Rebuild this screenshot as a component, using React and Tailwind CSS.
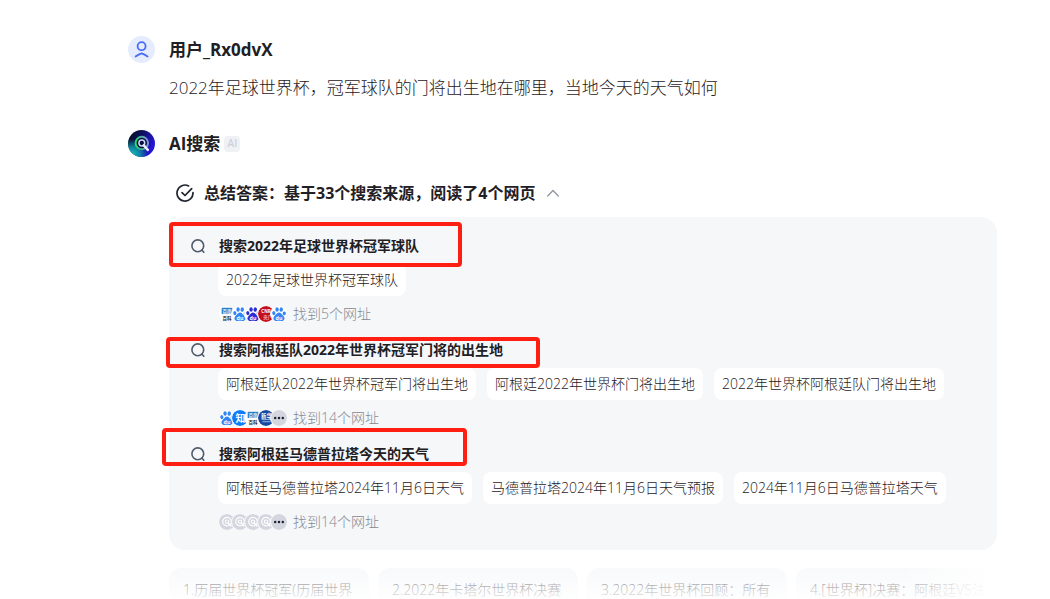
import { useState } from 'react';

const steps = [
  {
    title: '搜索2022年足球世界杯冠军球队',
    queries: ['2022年足球世界杯冠军球队'],
    sources: ['baike', 'paw', 'pawDark', 'cnr', 'paw'],
    found: '找到5个网址',
    frame: 'left-0 -top-1.5 w-[293px] h-[45px]',
  },
  {
    title: '搜索阿根廷队2022年世界杯冠军门将的出生地',
    queries: ['阿根廷队2022年世界杯冠军门将出生地', '阿根廷2022年世界杯门将出生地', '2022年世界杯阿根廷队门将出生地'],
    sources: ['paw', 'zhihu', 'baike', 'xinhua', 'more'],
    found: '找到14个网址',
    frame: '-left-[3px] top-[5px] w-[374px] h-[31px]',
  },
  {
    title: '搜索阿根廷马德普拉塔今天的天气',
    queries: ['阿根廷马德普拉塔2024年11月6日天气', '马德普拉塔2024年11月6日天气预报', '2024年11月6日马德普拉塔天气'],
    sources: ['blank', 'blank', 'blank', 'blank', 'more'],
    found: '找到14个网址',
    frame: '-left-[7px] -top-2 w-[305px] h-[38px]',
  },
];

const references = ['1.历届世界杯冠军(历届世界', '2.2022年卡塔尔世界杯决赛', '3.2022年世界杯回顾：所有', '4.[世界杯]决赛：阿根廷VS法'];

function UserAvatar() {
  return (
    <svg className="w-[27px] h-[27px] shrink-0" viewBox="0 0 27 27" fill="none" aria-hidden="true">
      <circle cx="13.5" cy="13.5" r="13.5" fill="#e4ecfd" />
      <circle cx="13.6" cy="10.2" r="4" stroke="#4a6cf7" strokeWidth="1.8" />
      <path d="M7.6 20.6c1.7-1.200 3.700-2.400 6-3.200 2.300.8 4.300 2 6 3.200" stroke="#4a6cf7" strokeWidth="1.8" strokeLinecap="round" />
    </svg>
  );
}

function AiAvatar() {
  return (
    <svg className="w-[27px] h-[27px] shrink-0" viewBox="0 0 27 27" fill="none" aria-hidden="true">
      <defs>
        <linearGradient id="aiBase" x1="3" y1="5" x2="26" y2="14" gradientUnits="userSpaceOnUse">
          <stop offset="0" stopColor="#07102c" />
          <stop offset="0.4" stopColor="#0e0f5c" />
          <stop offset="1" stopColor="#2417d8" />
        </linearGradient>
        <radialGradient id="aiTeal" cx="4" cy="25" r="16" gradientUnits="userSpaceOnUse">
          <stop offset="0" stopColor="#12c4c0" />
          <stop offset="0.5" stopColor="#0f9fb0" stopOpacity="0.8" />
          <stop offset="1" stopColor="#0f9fb0" stopOpacity="0" />
        </radialGradient>
        <linearGradient id="aiRing" x1="7" y1="14" x2="21" y2="12" gradientUnits="userSpaceOnUse">
          <stop offset="0" stopColor="#1fe860" />
          <stop offset="0.4" stopColor="#3fb08f" />
          <stop offset="1" stopColor="#8f90e8" />
        </linearGradient>
      </defs>
      <circle cx="13.5" cy="13.5" r="13.5" fill="url(#aiBase)" />
      <circle cx="13.5" cy="13.5" r="13.5" fill="url(#aiTeal)" />
      <circle cx="13.8" cy="13" r="6.2" fill="#080c3a" stroke="url(#aiRing)" strokeWidth="2" />
      <circle cx="13.8" cy="13" r="2.9" stroke="#c9d9ff" strokeWidth="1.5" />
      <path d="M15.8 15.4l4 4.4" stroke="#eceaff" strokeWidth="2.6" strokeLinecap="round" />
    </svg>
  );
}

function CheckIcon() {
  return (
    <svg className="w-[18px] h-[18px] shrink-0" viewBox="0 0 18 18" fill="none" stroke="#1f2430" strokeWidth="1.7" strokeLinecap="round" strokeLinejoin="round" aria-hidden="true">
      <path d="M12.6 1.9A8 8 0 1 0 17 8.6" />
      <path d="M6 8.6l3 2.9 6.7-6.9" />
    </svg>
  );
}

function SearchIcon() {
  return (
    <svg className="w-[14px] h-[14px] shrink-0" viewBox="0 0 14 14" fill="none" stroke="#4f5a6e" strokeWidth="1.6" strokeLinecap="round" aria-hidden="true">
      <circle cx="6.8" cy="6.8" r="5.9" />
      <path d="M10.8 11l2 2.2" />
    </svg>
  );
}

function Paw({ color }) {
  return (
    <>
      <circle cx="9" cy="9" r="9" fill="#fff" />
      <g fill={color}>
        <ellipse cx="3.2" cy="8" rx="1.8" ry="2.3" transform="rotate(-15 3.2 8)" />
        <ellipse cx="6.8" cy="3.9" rx="1.9" ry="2.5" />
        <ellipse cx="11.5" cy="4" rx="1.9" ry="2.5" transform="rotate(12 11.5 4)" />
        <ellipse cx="14.9" cy="8.3" rx="1.8" ry="2.2" transform="rotate(10 14.9 8.3)" />
        <path d="M9 7.2c1.8 0 2.6 1.4 3.6 2.6 1.2 1.3 2.9 2.500 2.600 4.700-.3 2-2 2.500-3.500 2.300-1.800-.3-3.600-.3-5.400 0-1.500.2-3.200-.3-3.500-2.300-.3-2.200 1.400-3.400 2.600-4.700C6.400 8.600 7.200 7.200 9 7.200z" />
      </g>
      <text x="9" y="15.4" fontSize="6" fontWeight="700" textAnchor="middle" fill="#fff">du</text>
    </>
  );
}

function SourceIcon({ type }) {
  return (
    <svg className="w-[18px] h-[18px] shrink-0 rounded-full border border-[#f5f7f9] bg-[#f5f7f9]" viewBox="0 0 18 18" aria-hidden="true">
      {type === 'paw' && <Paw color="#3385f5" />}
      {type === 'pawDark' && <Paw color="#2a2ed6" />}
      {type === 'baike' && (
        <>
          <circle cx="9" cy="9" r="9" fill="#fff" />
          <rect x="3" y="2" width="12" height="7" fill="#2c7fc4" />
          <text x="9" y="7.5" fontSize="5" fontWeight="700" textAnchor="middle" fill="#e2f1fc">百度</text>
          <text x="9" y="15.5" fontSize="5" fontWeight="700" textAnchor="middle" fill="#23272f">百科</text>
        </>
      )}
      {type === 'cnr' && (
        <>
          <circle cx="9" cy="9" r="9" fill="#c4101e" />
          <text x="9" y="7.5" fontSize="5" fontWeight="700" textAnchor="middle" fill="#fff">CNR</text>
          <text x="11" y="15" fontSize="5" fontWeight="700" textAnchor="middle" fill="#f4a9ad">央广</text>
        </>
      )}
      {type === 'zhihu' && (
        <>
          <circle cx="9" cy="9" r="9" fill="#0f7bfb" />
          <text x="9.5" y="13" fontSize="11" fontWeight="700" textAnchor="middle" fill="#fff">知</text>
        </>
      )}
      {type === 'xinhua' && (
        <>
          <circle cx="9" cy="9" r="9" fill="#15489f" />
          <text x="9.5" y="8.5" fontSize="6" fontWeight="700" textAnchor="middle" fill="#fff">新华</text>
          <path d="M4 10.8h11M5 13.2h9" stroke="#a9c4ec" strokeWidth="1" />
        </>
      )}
      {type === 'blank' && (
        <>
          <circle cx="9" cy="9" r="9" fill="#d3d6df" />
          <circle cx="9" cy="8.6" r="4.8" fill="none" stroke="#fff" strokeWidth="1.3" />
          <circle cx="9" cy="8.6" r="1.9" fill="none" stroke="#fff" strokeWidth="1.2" />
          <path d="M10.5 10.5l3 3" stroke="#fff" strokeWidth="1.6" strokeLinecap="round" />
        </>
      )}
      {type === 'more' && (
        <>
          <circle cx="9" cy="9" r="9" fill="#d3d6df" />
          <g fill="#1f2430">
            <circle cx="4.7" cy="9" r="1.4" />
            <circle cx="9" cy="9" r="1.4" />
            <circle cx="13.3" cy="9" r="1.4" />
          </g>
        </>
      )}
    </svg>
  );
}

function SearchStep({ step }) {
  return (
    <section>
      <div className="relative flex h-9 items-center gap-3.5 pl-[22px]">
        <SearchIcon />
        <h3 className="text-sm font-bold text-[#1f2024]">{step.title}</h3>
        {/* Highlight frame */}
        <div className={`pointer-events-none absolute z-10 rounded-sm border-4 border-[#ff1e12] ${step.frame}`} />
      </div>
      <div className="flex flex-wrap gap-[11px] pl-[49px]">
        {step.queries.map((query) => (
          <button key={query} type="button" className="h-8 rounded-lg bg-white px-2 text-sm font-light text-[#1f2024]">
            {query}
          </button>
        ))}
      </div>
      <div className="flex h-9 items-center gap-[5px] pl-[49px]">
        <div className="flex -space-x-[5px]">
          {step.sources.map((type, i) => (
            <SourceIcon key={i} type={type} />
          ))}
        </div>
        <span className="text-sm font-light text-[#848891]">{step.found}</span>
      </div>
    </section>
  );
}

export default function App() {
  const [open, setOpen] = useState(true);

  return (
    <main className="overflow-hidden bg-white pl-32 pr-[53px] pt-9 font-['Open_Sans','Noto_Sans_CJK_SC',sans-serif] text-[#1f2024]">
      {/* Question */}
      <div className="flex items-center gap-3.5">
        <UserAvatar />
        <h2 className="text-[17px] leading-[27px] font-bold">用户_Rx0dvX</h2>
      </div>
      <p className="mt-3 pl-[41px] text-[17px] leading-[26px] font-light">
        2022年足球世界杯，冠军球队的门将出生地在哪里，当地今天的天气如何
      </p>

      {/* Answer */}
      <div className="mt-[29px] flex items-center gap-3.5">
        <AiAvatar />
        <div className="flex items-center gap-1">
          <h2 className="text-[17px] leading-[26px] font-bold">AI搜索</h2>
          <span className="flex h-4 w-4 items-center justify-center rounded-sm bg-[#f0f1f5] text-[10px] font-semibold text-[#cdd0dc]">AI</span>
        </div>
      </div>

      <div className="pl-[41px]">
        <button
          type="button"
          aria-expanded={open}
          onClick={() => setOpen(!open)}
          className="mt-6 flex h-6 items-center gap-2.5 pl-[7px] text-base font-bold"
        >
          <CheckIcon />
          <span>总结答案：基于33个搜索来源，阅读了4个网页</span>
          <svg className="ml-0.5 h-3 w-3" viewBox="0 0 12 12" fill="none" stroke="#9195a3" strokeWidth="1.3" strokeLinecap="round" aria-hidden="true">
            <path d="M0.7 9L6 3.5L11.3 9" />
          </svg>
        </button>

        {open && (
          <div className="mt-3 rounded-2xl bg-[#f5f7f9] pt-[11px] pb-2.5">
            {steps.map((step) => (
              <SearchStep key={step.title} step={step} />
            ))}
          </div>
        )}

        {/* Reference cards, faded out */}
        <div className="relative mt-[18px] mr-1 h-[31px] overflow-hidden">
          <div className="flex gap-[9px]">
            {references.map((title) => (
              <a key={title} href="#" className="h-20 w-[200px] shrink-0 overflow-hidden rounded-xl bg-[#f5f7f9] px-3.5 pt-3 text-sm font-light whitespace-nowrap">
                {title}
              </a>
            ))}
          </div>
          <div className="pointer-events-none absolute inset-0 bg-linear-to-b from-white/30 to-white/90" />
          <div className="pointer-events-none absolute inset-y-0 right-0 w-24 bg-linear-to-r from-white/0 to-white" />
        </div>
      </div>
    </main>
  );
}
